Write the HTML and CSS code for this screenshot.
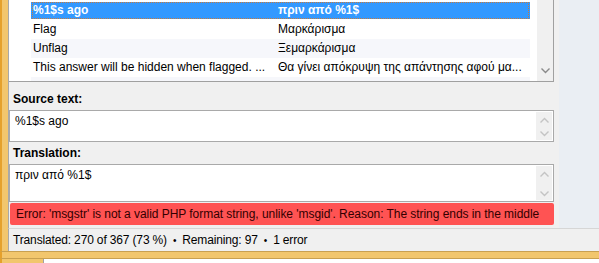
FILE: index.html
```html
<!DOCTYPE html>
<html lang="en">
<head>
  <meta charset="UTF-8">
  <title>Poedit</title>
  <link rel="stylesheet" href="styles.css">
</head>
<body>

<div class="screen">
  <div class="win">
    <div class="panes">
      <div class="editor">

        <!-- String list -->
        <div class="list">
          <div class="rows">
            <div class="row sel"><span class="c-src">%1$s ago</span><span class="c-tr">πριν από %1$</span></div>
            <div class="row"><span class="c-src">Flag</span><span class="c-tr">Μαρκάρισμα</span></div>
            <div class="row alt"><span class="c-src">Unflag</span><span class="c-tr">Ξεμαρκάρισμα</span></div>
            <div class="row"><span class="c-src">This answer will be hidden when flagged. ...</span><span class="c-tr">Θα γίνει απόκρυψη της απάντησης αφού μα...</span></div>
            <div class="row alt"></div>
          </div>
          <div class="vscroll list-scroll">
            <svg class="arrow" width="9" height="6" viewBox="0 0 9 6"><path d="M0.5 0.5 L4.5 4.5 L8.5 0.5" fill="none" stroke="#8a8a8a" stroke-width="1.4"/></svg>
          </div>
        </div>

        <!-- Source -->
        <div class="label label-src">Source text:</div>
        <div class="box box-src">
          <div class="box-text">%1$s ago</div>
          <div class="vscroll">
            <svg class="arrow" width="9" height="6" viewBox="0 0 9 6"><path d="M0.5 5.5 L4.5 1.5 L8.5 5.5" fill="none" stroke="#c4c4c4" stroke-width="1.4"/></svg>
            <svg class="arrow" width="9" height="6" viewBox="0 0 9 6"><path d="M0.5 0.5 L4.5 4.5 L8.5 0.5" fill="none" stroke="#c4c4c4" stroke-width="1.4"/></svg>
          </div>
        </div>

        <!-- Translation -->
        <div class="label label-tr">Translation:</div>
        <div class="box box-tr">
          <div class="box-text">πριν από %1$</div>
          <div class="vscroll">
            <svg class="arrow" width="9" height="6" viewBox="0 0 9 6"><path d="M0.5 5.5 L4.5 1.5 L8.5 5.5" fill="none" stroke="#c4c4c4" stroke-width="1.4"/></svg>
            <svg class="arrow" width="9" height="6" viewBox="0 0 9 6"><path d="M0.5 0.5 L4.5 4.5 L8.5 0.5" fill="none" stroke="#c4c4c4" stroke-width="1.4"/></svg>
          </div>
        </div>

        <div class="error">Error: 'msgstr' is not a valid PHP format string, unlike 'msgid'. Reason: The string ends in the middle</div>
      </div>
      <div class="side"></div>
    </div>

    <div class="status">Translated: 270 of 367 (73 %)<span class="dot">•</span>Remaining: 97<span class="dot">•</span>1 error</div>
  </div>

  <!-- window frame bottom + window behind -->
  <div class="frame-bottom"></div>
  <div class="behind">
    <div class="behind-edge"></div>
    <div class="behind-body"></div>
  </div>
</div>

</body>
</html>
```

FILE: styles.css
```css
/* Page */
body {
  margin: 0;
  background: #fff;
  font-family: "Liberation Sans", Arial, sans-serif;
  font-size: 12px;
  color: #000;
}

.screen {
  width: 599px;
  height: 263px;
  overflow: hidden;
}

/* Window with orange active frame */
.win {
  border-left: 2px solid #e5a12c;
  padding-left: 6px;
  background: #f2c66d;
}

.panes {
  display: flex;
  height: 228px;
  border-left: 1px solid #a8a8a8;
}

.editor {
  width: 550px;
  background: #f0f0f0;
  display: flex;
  flex-direction: column;
}

.side {
  flex: 1;
  background: #eaeef3;
}

/* String list */
.list {
  display: flex;
  flex-shrink: 0;
  height: 81px;
  width: 544px;
  overflow: hidden;
  background: #fff;
  border-right: 1px solid #a0a0a0;
  border-bottom: 1px solid #a0a0a0;
}

.rows {
  flex: 1;
  padding: 1px 7px 0 22px;
}

.row {
  display: flex;
  height: 19px;
  line-height: 19px;
  white-space: nowrap;
}

.row.alt {
  background: #f6f7fb;
}

.row.sel {
  background: #3399ff;
  color: #fff;
  font-weight: bold;
  box-shadow: inset 0 1px 0 #fff, inset 0 -1px 0 #fff;
  outline: 1px dotted #c87a3c;
  outline-offset: -2px;
}

.c-src {
  width: 243px;
  padding-left: 2px;
  overflow: hidden;
}

.c-tr {
  flex: 1;
  padding-left: 2px;
  overflow: hidden;
}

.vscroll {
  width: 16px;
  background: #f0f0f0;
  display: flex;
  flex-direction: column;
  align-items: center;
  justify-content: space-between;
  padding: 9px 0 7px;
  box-sizing: border-box;
}

.list-scroll {
  justify-content: flex-end;
}

/* Labels and text boxes */
.label {
  font-weight: bold;
  padding-left: 4px;
  flex-shrink: 0;
}

.label-src {
  height: 21px;
  line-height: 21px;
  padding-top: 7px;
}

.label-tr {
  height: 22px;
  line-height: 22px;
}

.box {
  display: flex;
  flex-shrink: 0;
  width: 543px;
  background: #fff;
  border: 1px solid #a9a9a9;
}

.box-src {
  height: 30px;
}

.box-tr {
  height: 36px;
}

.box-text {
  flex: 1;
  padding: 3px 5px;
}

.box .vscroll {
  margin: 1px 1px 1px 0;
  padding: 5px 0 3px;
}

/* Error banner */
.error {
  flex-shrink: 0;
  margin: 1px 5px 0 1px;
  height: 22px;
  line-height: 22px;
  padding-left: 6px;
  background: #ff5353;
  color: #300;
  border-radius: 2px;
  white-space: nowrap;
  overflow: hidden;
  letter-spacing: -0.05px;
}

/* Status bar */
.status {
  height: 22px;
  line-height: 22px;
  border-top: 1px solid #d6d6d6;
  border-left: 1px solid #a8a8a8;
  background: #f0f0f0;
  padding-left: 4px;
  letter-spacing: -0.15px;
}

.dot {
  margin: 0 6px;
  font-size: 10px;
}

/* Frame bottom and the window behind */
.frame-bottom {
  height: 6px;
  background: #f2c66d;
  border-top: 1px solid #c9a050;
  border-bottom: 1px solid #c9a050;
  border-left: 2px solid #e5a12c;
}

.behind {
  display: flex;
  height: 10px;
}

.behind-edge {
  width: 41px;
  background: #f2c66d;
  border-left: 2px solid #e5a12c;
}

.behind-body {
  flex: 1;
  background: #fff;
  border-left: 1px solid #a0a0a0;
}
```
